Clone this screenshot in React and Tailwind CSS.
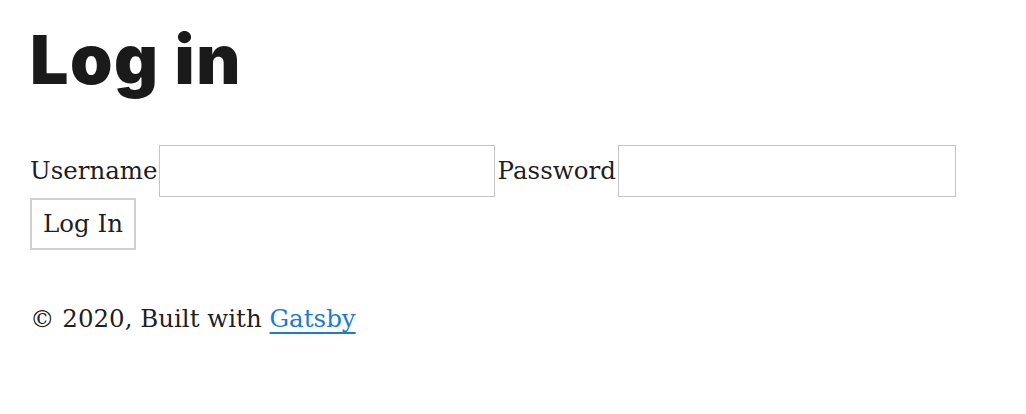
export default function App() {
  return (
    <div className="min-h-screen bg-white px-[30px] pt-[14px] text-[hsla(0,0%,0%,0.9)] font-['DejaVu_Serif',serif] text-[24.5px] leading-[30px]">
      <h1 className="font-['Inter',sans-serif] font-black text-[68px] leading-[90px] tracking-[1.5px] text-[#1a1a1a] mb-[41px]">
        Log in
      </h1>
      <form onSubmit={(e) => e.preventDefault()}>
        <div className="flex items-center">
          <label>Username</label>
          <input type="text" className="ml-[1px] w-[336px] h-[52px] border border-[#c4c4c4] bg-white" />
          <label className="ml-[3px]">Password</label>
          <input type="password" className="ml-[2px] w-[338px] h-[52px] border border-[#c4c4c4] bg-white" />
        </div>
        <button type="submit" className="mt-[1px] w-[106px] h-[52px] border-2 border-[#d0d0d0] bg-white text-[hsla(0,0%,0%,0.9)]">
          Log In
        </button>
      </form>
      <footer className="mt-[54px]">
        © 2020, Built with{" "}
        <a href="#" className="text-[#1a7bd0] underline underline-offset-[5px]">Gatsby</a>
      </footer>
    </div>
  );
}
